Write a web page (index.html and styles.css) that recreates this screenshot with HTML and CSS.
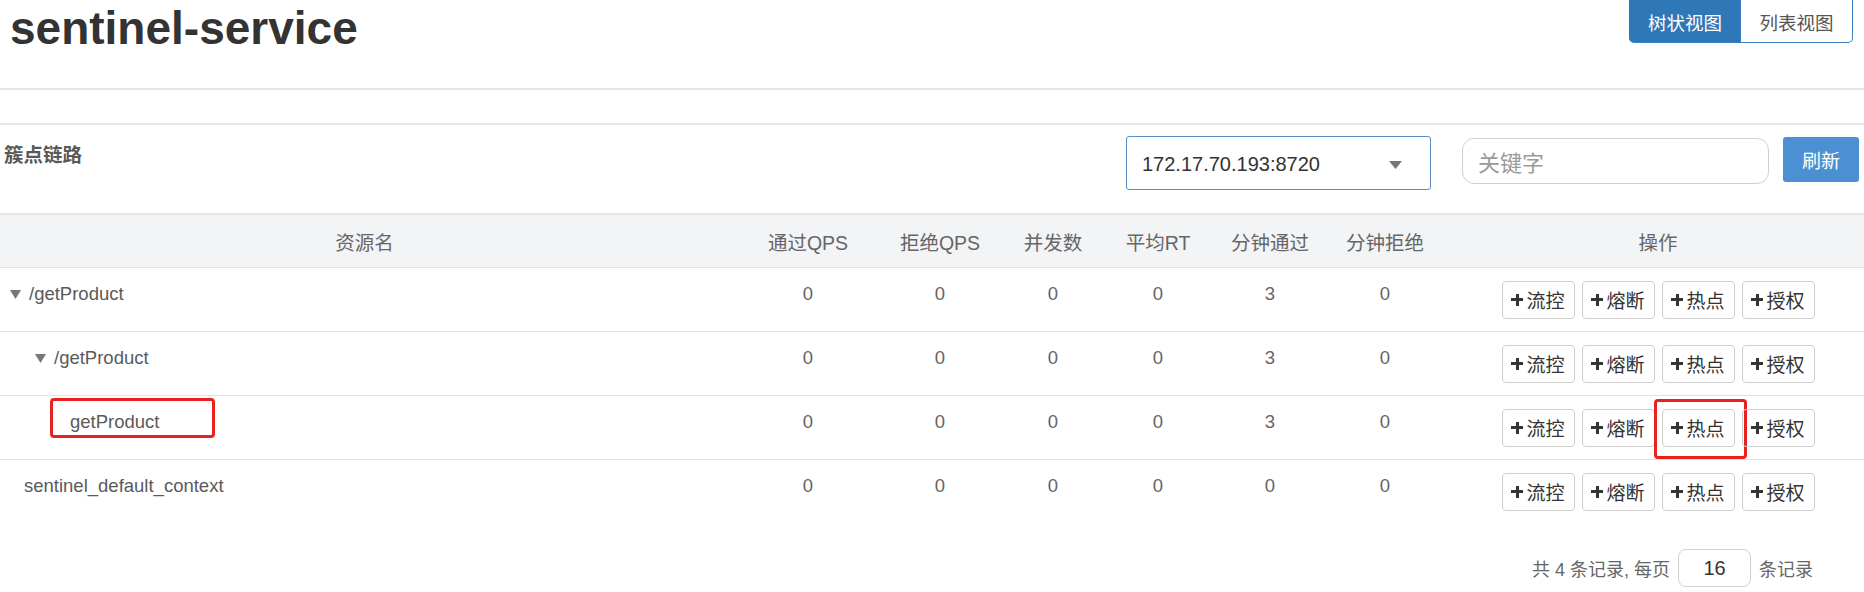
FILE: index.html
```html
<!DOCTYPE html>
<html lang="zh-CN">
<head>
  <meta charset="UTF-8">
  <title>sentinel-service</title>
  <link rel="stylesheet" href="styles.css">
</head>
<body>
  <div class="page-head">
    <h1>sentinel-service</h1>
    <div class="view-switch">
      <span class="view-btn active">树状视图</span>
      <span class="view-btn">列表视图</span>
    </div>
  </div>
  <div class="divider"></div>

  <div class="panel">
    <div class="panel-head">
      <div class="panel-title">簇点链路</div>
      <div class="machine-select">
        <span>172.17.70.193:8720</span>
        <svg class="caret" width="13" height="8" viewBox="0 0 13 8"><polygon points="0,0 13,0 6.5,8" fill="#777"/></svg>
      </div>
      <div class="search-input">关键字</div>
      <button class="refresh-btn">刷新</button>
    </div>

    <table class="resource-table">
      <colgroup>
        <col class="c-name"><col class="c-pass"><col class="c-block"><col class="c-thread">
        <col class="c-rt"><col class="c-minpass"><col class="c-minblock"><col class="c-op">
      </colgroup>
      <thead>
        <tr>
          <th>资源名</th><th>通过QPS</th><th>拒绝QPS</th><th>并发数</th>
          <th>平均RT</th><th>分钟通过</th><th>分钟拒绝</th><th class="op">操作</th>
        </tr>
      </thead>
      <tbody>
        <tr>
          <td class="name lvl-0"><svg class="tri" width="11" height="9" viewBox="0 0 11 9"><polygon points="0,0 11,0 5.5,9" fill="#777"/></svg>/getProduct</td>
          <td>0</td><td>0</td><td>0</td><td>0</td><td>3</td><td>0</td>
          <td class="op">
            <div class="ops">
              <span class="op-btn"><i class="plus"></i>流控</span>
              <span class="op-btn"><i class="plus"></i>熔断</span>
              <span class="op-btn"><i class="plus"></i>热点</span>
              <span class="op-btn"><i class="plus"></i>授权</span>
            </div>
          </td>
        </tr>
        <tr>
          <td class="name lvl-1"><svg class="tri" width="11" height="9" viewBox="0 0 11 9"><polygon points="0,0 11,0 5.5,9" fill="#777"/></svg>/getProduct</td>
          <td>0</td><td>0</td><td>0</td><td>0</td><td>3</td><td>0</td>
          <td class="op">
            <div class="ops">
              <span class="op-btn"><i class="plus"></i>流控</span>
              <span class="op-btn"><i class="plus"></i>熔断</span>
              <span class="op-btn"><i class="plus"></i>热点</span>
              <span class="op-btn"><i class="plus"></i>授权</span>
            </div>
          </td>
        </tr>
        <tr>
          <td class="name lvl-2"><span class="mark name-mark"></span>getProduct</td>
          <td>0</td><td>0</td><td>0</td><td>0</td><td>3</td><td>0</td>
          <td class="op">
            <div class="ops">
              <span class="op-btn"><i class="plus"></i>流控</span>
              <span class="op-btn"><i class="plus"></i>熔断</span>
              <span class="op-btn marked"><i class="plus"></i>热点<span class="mark btn-mark"></span></span>
              <span class="op-btn"><i class="plus"></i>授权</span>
            </div>
          </td>
        </tr>
        <tr>
          <td class="name leaf-0">sentinel_default_context</td>
          <td>0</td><td>0</td><td>0</td><td>0</td><td>0</td><td>0</td>
          <td class="op">
            <div class="ops">
              <span class="op-btn"><i class="plus"></i>流控</span>
              <span class="op-btn"><i class="plus"></i>熔断</span>
              <span class="op-btn"><i class="plus"></i>热点</span>
              <span class="op-btn"><i class="plus"></i>授权</span>
            </div>
          </td>
        </tr>
      </tbody>
    </table>

    <div class="pager">
      <span>共 4 条记录, 每页</span>
      <span class="page-size">16</span>
      <span>条记录</span>
    </div>
  </div>
</body>
</html>
```

FILE: styles.css
```css
body {
  margin: 0;
  font-family: "Liberation Sans", Arial, "Noto Sans CJK SC", sans-serif;
  color: #666;
  background: #fff;
  overflow: hidden;
}

.page-head {
  display: flex;
  justify-content: space-between;
  align-items: flex-start;
  height: 68px;
}

h1 {
  margin: 0 0 0 10px;
  font-size: 46px;
  line-height: 56px;
  font-weight: bold;
  color: #333;
}

.view-switch {
  display: flex;
  margin-top: -4px;
  margin-right: 11px;
}

.view-btn {
  width: 112px;
  height: 47px;
  box-sizing: border-box;
  display: flex;
  align-items: center;
  justify-content: center;
  font-size: 18.5px;
  color: #555;
  border: 1px solid #3a7fc0;
  border-left: none;
  border-radius: 0 5px 5px 0;
  padding-top: 4px;
}

.view-btn.active {
  background: #2f78b8;
  color: #fff;
  border-left: 1px solid #2f78b8;
  border-radius: 5px 0 0 5px;
}

.divider {
  margin-top: 20px;
  border-top: 2px solid #e6e6e6;
}

.panel {
  margin-top: 33px;
  border-top: 2px solid #e8e8e8;
}

.panel-head {
  display: flex;
  align-items: flex-start;
  height: 88px;
  padding-top: 11px;
  box-sizing: border-box;
}

.panel-title {
  margin: 6px 0 0 4px;
  font-size: 19.5px;
  line-height: 26px;
  font-weight: bold;
  color: #595959;
}

.machine-select {
  margin-left: auto;
  width: 305px;
  height: 54px;
  box-sizing: border-box;
  border: 1.5px solid #5b8dc0;
  border-radius: 3px;
  display: flex;
  align-items: center;
  justify-content: space-between;
  padding: 3px 28px 0 15px;
  font-size: 20px;
  color: #333;
}

.search-input {
  margin-left: 31px;
  margin-top: 2px;
  width: 307px;
  height: 46px;
  box-sizing: border-box;
  border: 1px solid #d0d0d0;
  border-radius: 12px;
  display: flex;
  align-items: center;
  padding-left: 15px;
  font-size: 22px;
  color: #9a9a9a;
}

.refresh-btn {
  margin-left: 14px;
  margin-top: 1px;
  margin-right: 5px;
  width: 76px;
  height: 45px;
  border: none;
  border-radius: 3px;
  background: #4b90d2;
  color: #fff;
  font-family: inherit;
  font-size: 19px;
}

.resource-table {
  width: 100%;
  border-collapse: collapse;
  table-layout: fixed;
}

.c-name { width: 729px; }
.c-pass { width: 158px; }
.c-block { width: 106px; }
.c-thread { width: 120px; }
.c-rt { width: 90px; }
.c-minpass { width: 134px; }
.c-minblock { width: 96px; }

.resource-table th {
  height: 52px;
  background: #f3f4f6;
  border-top: 2px solid #e6e6e6;
  border-bottom: 1px solid #e2e2e2;
  font-weight: normal;
  font-size: 19.5px;
  color: #666;
  text-align: center;
  padding: 0;
}

.resource-table td {
  height: 63px;
  line-height: 51px;
  vertical-align: top;
  border-top: 1px solid #e2e2e2;
  font-size: 18.5px;
  color: #666;
  text-align: center;
  padding: 0;
}

.resource-table tbody tr:first-child td { border-top: none; }

.resource-table .op { padding-left: 19px; }

.resource-table td.op {
  vertical-align: middle;
  line-height: normal;
}

.resource-table td.name {
  text-align: left;
  position: relative;
  color: #5a5a5a;
}

.tri { margin-right: 8px; vertical-align: 1px; }
.lvl-0 { padding-left: 10px !important; }
.lvl-1 { padding-left: 35px !important; }
.lvl-2 { padding-left: 70px !important; }
.leaf-0 { padding-left: 24px !important; }

.ops {
  display: flex;
  justify-content: center;
  gap: 7px;
}

.op-btn {
  position: relative;
  width: 73px;
  height: 38px;
  box-sizing: border-box;
  border: 1px solid #cfcfcf;
  border-radius: 4px;
  display: flex;
  align-items: center;
  justify-content: center;
  font-size: 19px;
  color: #333;
}

.plus {
  position: relative;
  width: 12px;
  height: 12px;
  margin-right: 3px;
}

.plus::before,
.plus::after {
  content: "";
  position: absolute;
  background: #333;
}

.plus::before { left: 4.25px; top: 0; width: 3.5px; height: 12px; }
.plus::after { left: 0; top: 4.25px; width: 12px; height: 3.5px; }

.mark {
  position: absolute;
  border: 3px solid #e8231f;
  border-radius: 4px;
}

.name-mark {
  left: 50px;
  top: 2px;
  width: 159px;
  height: 34px;
}

.btn-mark {
  left: -9px;
  top: -11px;
  width: 87px;
  height: 54px;
}

.pager {
  display: flex;
  justify-content: flex-end;
  align-items: center;
  gap: 8px;
  margin-top: 26px;
  padding-right: 51px;
  font-size: 18px;
  color: #666;
}

.page-size {
  width: 73px;
  height: 38px;
  box-sizing: border-box;
  border: 1px solid #d0d0d0;
  border-radius: 8px;
  display: flex;
  align-items: center;
  justify-content: center;
  font-size: 20px;
  color: #333;
}
```
